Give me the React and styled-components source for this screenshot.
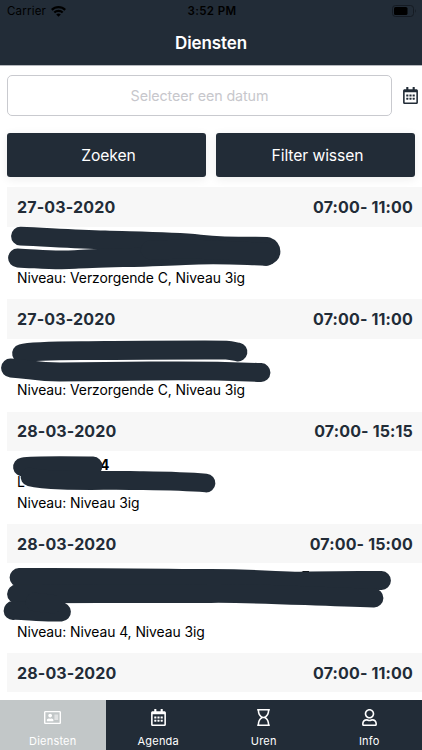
import { useState } from 'react';
import styled, { createGlobalStyle } from 'styled-components';
import { FaRegCalendarAlt, FaRegAddressCard, FaRegHourglass, FaRegUser } from 'react-icons/fa';

const DARK = '#222c37';

const shifts = [
  {
    date: '27-03-2020',
    time: '07:00- 11:00',
    level: 'Verzorgende C, Niveau 3ig',
    height: 72.7,
    lines: ['', ''],
    strokes: [
      'M20.5 9.2 C50 10.5 75 12 105 13 S170 14 200 17 S250 19 267 19.3 C272 21 273 28 266 29.3',
      'M17.5 31 C40 32 55 34 75 32.5 S150 30.5 185 28.5 S240 28.5 266 29.3',
      'M150 23 L190 22 L266 25',
    ],
  },
  {
    date: '27-03-2020',
    time: '07:00- 11:00',
    level: 'Verzorgende C, Niveau 3ig',
    height: 72.7,
    lines: ['', ''],
    strokes: [
      'M21.5 14.5 C35 11 75 12 105 11.5 S180 11 205 11 S228 11 238 13',
      'M10.5 29 C30 30 35 33 60 33 S110 32.5 150 32 S225 32 261 33.5',
    ],
  },
  {
    date: '28-03-2020',
    time: '07:00- 15:15',
    level: 'Niveau 3ig',
    height: 72.7,
    lines: ['4', 'L'],
    indent: 83,
    strokes: [
      'M22.5 16 C35 14 60 14.5 93 15',
      'M30 26 C50 31 100 29 130 29.5 S180 30 206 32',
    ],
  },
  {
    date: '28-03-2020',
    time: '07:00- 15:00',
    level: 'Niveau 4, Niveau 3ig',
    height: 89.4,
    lines: ['', '', ''],
    strokes: [
      'M19 14.5 C80 14 150 15 211 15.5 S280 18.5 305 18 S350 17 381.5 17.5',
      'M16.5 31 C80 30 160 31 211 30.5 S310 33.5 374 35',
      'M13 47.5 C25 47 40 50 61.5 49',
      'M35 39 L52 41',
    ],
    specks: ['M302.5 9 H309'],
  },
  { date: '28-03-2020', time: '07:00- 11:00', height: 20, lines: [], strokes: [] },
];

const tabs = [
  { name: 'Diensten', Icon: FaRegAddressCard },
  { name: 'Agenda', Icon: FaRegCalendarAlt },
  { name: 'Uren', Icon: FaRegHourglass },
  { name: 'Info', Icon: FaRegUser },
];

const StatusBar = () => (
  <Status>
    <Carrier>
      Carrier
      <svg width="15" height="11" viewBox="0 0 15 11">
        <g fill="none" stroke="#000" strokeWidth="2.2">
          <path d="M.8 3.9 C4.5 .2 10.5 .2 14.2 3.9" />
          <path d="M3.3 6.5 C5.6 4.2 9.4 4.2 11.7 6.5" />
        </g>
        <path d="M5.2 8.4 C6.5 7.2 8.5 7.2 9.8 8.4 L7.5 10.8 Z" />
      </svg>
    </Carrier>
    <Clock>3:52 PM</Clock>
    <Battery>
      <svg width="25" height="12" viewBox="0 0 25 12">
        <rect x=".5" y=".5" width="21" height="11" rx="3" fill="none" stroke="#151b23" />
        <rect x="2" y="2" width="13.5" height="8" rx="1.6" />
        <path d="M23 4 Q24.6 6 23 8 Z" fill="#151b23" />
      </svg>
    </Battery>
  </Status>
);

const Shift = ({ shift }) => (
  <div>
    <ShiftHeader>
      <span>{shift.date}</span>
      <span>{shift.time}</span>
    </ShiftHeader>
    <ShiftBody $height={shift.height}>
      {shift.lines.map((line, i) => (
        <Line key={i} $bold={i === 0} $indent={i === 0 ? shift.indent : 0}>{line}</Line>
      ))}
      {shift.level && <Level>Niveau: {shift.level}</Level>}
      <Marker width="422" height={shift.height} fill="none" strokeLinejoin="round">
        {shift.specks?.map((d) => <path key={d} d={d} stroke="#000" strokeWidth="2" />)}
        {shift.strokes.map((d) => (
          <path key={d} d={d} stroke={DARK} strokeWidth="18.8" strokeLinecap="round" />
        ))}
      </Marker>
    </ShiftBody>
  </div>
);

const App = () => {
  const [active, setActive] = useState('Diensten');

  return (
    <Screen>
      <GlobalStyle />
      <Header>
        <StatusBar />
        <Title>Diensten</Title>
      </Header>
      <SearchRow>
        <DateInput placeholder="Selecteer een datum" readOnly />
        <FaRegCalendarAlt size={17} color={DARK} />
      </SearchRow>
      <ButtonRow>
        <Button>Zoeken</Button>
        <Button>Filter wissen</Button>
      </ButtonRow>
      <List>
        {shifts.map((shift, i) => <Shift key={i} shift={shift} />)}
      </List>
      <TabBar>
        {tabs.map(({ name, Icon }) => (
          <Tab key={name} $active={name === active} onClick={() => setActive(name)}>
            <Icon size={17} />
            <span>{name}</span>
          </Tab>
        ))}
      </TabBar>
    </Screen>
  );
};

const GlobalStyle = createGlobalStyle`
  * {
    box-sizing: border-box;
  }
  body {
    margin: 0;
    overflow: hidden;
    font-family: Inter, "Liberation Sans", sans-serif;
  }
`;

const Screen = styled.div`
  display: flex;
  flex-direction: column;
  width: 422px;
  height: 750px;
  overflow: hidden;
  background-color: #fff;
`;

const Header = styled.div`
  flex: none;
  height: 66px;
  background-color: ${DARK};
  border-bottom: 1px solid #b5b8bd;
`;

const Status = styled.div`
  display: grid;
  grid-template-columns: 1fr auto 1fr;
  align-items: center;
  height: 22px;
  padding: 0 5px 0 7px;
  font-size: 11.5px;
  color: #000;
`;

const Carrier = styled.div`
  display: flex;
  align-items: center;
  gap: 5px;
  letter-spacing: 0.2px;
`;

const Clock = styled.div`
  font-weight: 600;
  letter-spacing: 0.4px;
`;

const Battery = styled.div`
  display: flex;
  justify-content: flex-end;
`;

const Title = styled.div`
  height: 42px;
  line-height: 42px;
  text-align: center;
  font-size: 17px;
  font-weight: 600;
  letter-spacing: -0.1px;
  color: #fff;
`;

const SearchRow = styled.div`
  display: flex;
  flex: none;
  align-items: center;
  justify-content: space-between;
  padding: 9px 3px 0 7px;
`;

const DateInput = styled.input`
  width: 385px;
  height: 41px;
  border: 1px solid #c9cacf;
  border-radius: 5px;
  background-color: #fff;
  text-align: center;
  font-family: inherit;
  font-size: 14.3px;
  letter-spacing: -0.1px;
  outline: none;
  &::placeholder {
    color: #c7c7cc;
  }
`;

const ButtonRow = styled.div`
  display: flex;
  flex: none;
  gap: 10px;
  padding: 17px 7px 10px;
`;

const Button = styled.button`
  flex: 1;
  height: 44px;
  padding: 0 0 0 4px;
  border: none;
  border-radius: 3px;
  background-color: ${DARK};
  box-shadow: 0 2px 10px rgba(0, 0, 0, 0.08);
  color: #fff;
  font-family: inherit;
  font-size: 15.7px;
  letter-spacing: -0.1px;
`;

const List = styled.div`
  flex: 1;
  min-height: 0;
  overflow: hidden;
  padding-left: 7px;
`;

const ShiftHeader = styled.div`
  display: flex;
  align-items: center;
  justify-content: space-between;
  height: 39.6px;
  padding: 0 9px 0 10px;
  background-color: #f7f7f7;
  color: ${DARK};
  font-size: 16px;
  font-weight: 700;
  letter-spacing: 0.15px;
`;

const ShiftBody = styled.div`
  position: relative;
  height: ${({ $height }) => $height}px;
  padding: 6px 10px 0;
  font-size: 13.9px;
  letter-spacing: -0.06px;
  color: #000;
`;

const Line = styled.div`
  height: 17px;
  line-height: 17px;
  padding-left: ${({ $indent }) => $indent || 0}px;
  font-weight: ${({ $bold }) => ($bold ? 700 : 400)};
`;

const Level = styled.div`
  margin-top: 3.5px;
  line-height: 17px;
`;

const Marker = styled.svg`
  position: absolute;
  top: 0;
  left: -7px;
  overflow: visible;
`;

const TabBar = styled.div`
  display: flex;
  flex: none;
  height: 50px;
  background-color: ${DARK};
`;

const Tab = styled.div`
  display: flex;
  flex: 1;
  flex-direction: column;
  align-items: center;
  justify-content: space-between;
  padding: 9px 0 2px;
  background-color: ${({ $active }) => ($active ? '#c2c7c8' : 'transparent')};
  color: #fff;
  font-size: 11px;
  line-height: 13px;
  letter-spacing: 0.2px;
  cursor: pointer;
`;

export default App;
